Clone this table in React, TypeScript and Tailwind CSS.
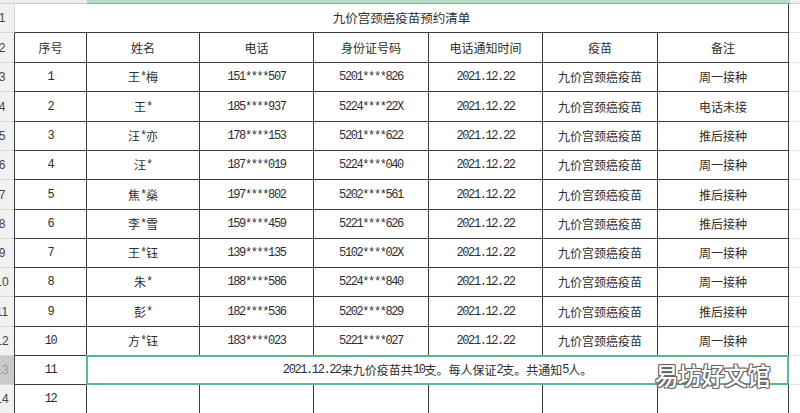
const cols = "grid grid-cols-[14px_73px_113px_114px_115px_114px_115px_131px_1fr]";

const rows = [
  ["1", "王*梅", "151****507", "5201****826", "周一接种"],
  ["2", "王*", "185****937", "5224****22X", "电话未接"],
  ["3", "汪*亦", "178****153", "5201****622", "推后接种"],
  ["4", "汪*", "187****019", "5224****040", "周一接种"],
  ["5", "焦*燊", "197****802", "5202****561", "推后接种"],
  ["6", "李*雪", "159****459", "5221****626", "推后接种"],
  ["7", "王*钰", "139****135", "5102****02X", "周一接种"],
  ["8", "朱*", "188****586", "5224****840", "周一接种"],
  ["9", "彭*", "182****536", "5202****829", "推后接种"],
  ["10", "方*钰", "183****023", "5221****027", "周一接种"],
];

// row heights from the sheet, row 1 .. row 14
const heights = ["h-[29px]", "h-[30px]", "h-[29px]", "h-[30px]", "h-[29px]", "h-[29px]", "h-[30px]", "h-[29px]", "h-[29px]", "h-[29px]", "h-[30px]", "h-[29px]", "h-[29px]", "h-[29px]"];

// ascii runs get the narrow half-width look of the sheet font
function Txt({ s }: { s: string }) {
  const parts = s.split(/([\x00-\x7f]+)/).filter(Boolean);
  return (
    <>
      {parts.map((p, i) =>
        /^[\x00-\x7f]+$/.test(p) ? (
          <span key={i} className="font-['Liberation_Mono',monospace] tracking-[-1.4px]">
            {p}
          </span>
        ) : (
          <span key={i}>{p}</span>
        )
      )}
    </>
  );
}

function RowHead({ n, active }: { n: number; active?: boolean }) {
  return (
    <div
      className={`overflow-hidden border-b border-[#d6d6d6] flex items-center ${
        active ? "bg-[#c9cbca] text-[#9a9a9a]" : "bg-[#f1f1f1] text-[#444]"
      }`}
    >
      <div className="-ml-[10px] w-[24px] shrink-0 text-center font-['Liberation_Sans',sans-serif] text-[12px]">{n}</div>
    </div>
  );
}

function Cell({ children, first }: { children?: React.ReactNode; first?: boolean }) {
  return (
    <div
      className={`flex items-center justify-center border-r border-b border-[#3c3c3c] whitespace-nowrap ${
        first ? "border-l" : ""
      }`}
    >
      {children}
    </div>
  );
}

function Tail() {
  return <div className="border-b border-[#e3e3e3]" />;
}

export default function App() {
  return (
    <div className="relative w-[800px] h-[413px] overflow-hidden bg-white text-[#2e2e2e] text-[12px] font-['Noto_Sans_CJK_SC',sans-serif]">
      {/* column header strip, mostly scrolled away */}
      <div className="flex h-[4px]">
        <div className="w-[87px] bg-[#eeeeee] border-b border-[#cfcfcf]" />
        <div className="w-[703px] bg-[#b4dcc6] border-b border-[#6fbf98]" />
        <div className="flex-1 bg-[#eeeeee] border-b border-[#cfcfcf]" />
      </div>

      {/* title row */}
      <div className={`${cols} ${heights[0]}`}>
        <RowHead n={1} />
        <div className="col-span-7 flex items-center justify-center border-b border-r border-[#3c3c3c] border-l-[#d6d6d6] border-l text-[12.5px]">
          九价宫颈癌疫苗预约清单
        </div>
        <Tail />
      </div>

      {/* header row */}
      <div className={`${cols} ${heights[1]}`}>
        <RowHead n={2} />
        {["序号", "姓名", "电话", "身份证号码", "电话通知时间", "疫苗", "备注"].map((h, i) => (
          <Cell key={h} first={i === 0}>
            {h}
          </Cell>
        ))}
        <Tail />
      </div>

      {rows.map((r, idx) => (
        <div key={r[0]} className={`${cols} ${heights[idx + 2]}`}>
          <RowHead n={idx + 3} />
          <Cell first>
            <Txt s={r[0]} />
          </Cell>
          <Cell>
            <Txt s={r[1]} />
          </Cell>
          <Cell>
            <Txt s={r[2]} />
          </Cell>
          <Cell>
            <Txt s={r[3]} />
          </Cell>
          <Cell>
            <Txt s="2021.12.22" />
          </Cell>
          <Cell>九价宫颈癌疫苗</Cell>
          <Cell>{r[4]}</Cell>
          <Tail />
        </div>
      ))}

      {/* selected merged row */}
      <div className={`${cols} ${heights[12]}`}>
        <RowHead n={13} active />
        <Cell first>
          <Txt s="11" />
        </Cell>
        <div className="col-span-6 -ml-px -mt-px flex items-center justify-center border-2 border-[#5cb791] whitespace-nowrap">
          <Txt s="2021.12.22来九价疫苗共10支。每人保证2支。共通知5人。" />
        </div>
        <Tail />
      </div>

      <div className={`${cols} ${heights[13]}`}>
        <RowHead n={14} />
        <Cell first>
          <Txt s="12" />
        </Cell>
        <Cell />
        <Cell />
        <Cell />
        <Cell />
        <Cell />
        <Cell />
        <Tail />
      </div>

      {/* watermark */}
      <div className="absolute left-[655px] top-[364px] text-[23.5px] font-medium text-white leading-none tracking-[-0.5px] [text-shadow:-1px_-1px_0_#666,1px_-1px_0_#666,-1px_1px_0_#666,1px_1px_0_#666,0_0_2px_#444]">
        易坊好文馆
      </div>
    </div>
  );
}
